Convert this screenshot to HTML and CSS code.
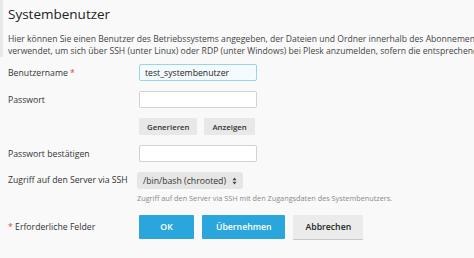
FILE: index.html
```html
<!DOCTYPE html>
<html>
<head>
    <title>Systembenutzer</title>
    <link rel="stylesheet" href="styles.css">
</head>
<body>
    <div class="header">
        <h1>Systembenutzer</h1>
        <p class="intro">Hier können Sie einen Benutzer des Betriebssystems angegeben, der Dateien und Ordner innerhalb des Abonnements verwaltet.<br>verwendet, um sich über SSH (unter Linux) oder RDP (unter Windows) bei Plesk anzumelden, sofern die entsprechenden Berechtigungen erteilt wurden.</p>
    </div>

    <form class="form">
        <div class="row">
            <label class="label">Benutzername <span class="req">*</span></label>
            <div class="field"><input class="input focused" type="text" value="test_systembenutzer"></div>
        </div>
        <div class="row">
            <label class="label">Passwort</label>
            <div class="field"><input class="input" type="password"></div>
        </div>
        <div class="row">
            <div class="label"></div>
            <div class="field">
                <button type="button" class="btn small">Generieren</button>
                <button type="button" class="btn small">Anzeigen</button>
            </div>
        </div>
        <div class="row">
            <label class="label">Passwort bestätigen</label>
            <div class="field"><input class="input" type="password"></div>
        </div>
        <div class="row row-select">
            <label class="label">Zugriff auf den Server via SSH</label>
            <div class="field">
                <div class="select">/bin/bash (chrooted)
                    <svg class="arrows" viewBox="0 0 6 10" width="5" height="8"><path d="M3 0.5L5.5 4H0.5z M3 9.5L5.5 6H0.5z" fill="#444"/></svg>
                </div>
                <div class="hint">Zugriff auf den Server via SSH mit den Zugangsdaten des Systembenutzers.</div>
            </div>
        </div>
        <div class="row row-footer">
            <div class="label"><span class="req">*</span> Erforderliche Felder</div>
            <div class="field">
                <button type="button" class="btn primary">OK</button>
                <button type="button" class="btn primary">Übernehmen</button>
                <button type="button" class="btn cancel">Abbrechen</button>
            </div>
        </div>
    </form>
</body>
</html>
```

FILE: styles.css
```css
html, body {
    margin: 0;
    padding: 0;
    background-color: #f9f9f9;
    overflow: hidden;
}
body {
    font-family: 'Open Sans', 'Noto Sans', sans-serif;
    color: #333;
    width: 900px;
}
.header {
    border-left: 3px solid #e8e8e8;
    padding: 5px 0 0 5px;
}
h1 {
    font-size: 13.5px;
    font-weight: 400;
    color: #222;
    margin: 0 0 10px 0;
    line-height: 18px;
}
.intro {
    font-size: 8.6px;
    line-height: 12px;
    color: #444;
    margin: 0;
    white-space: nowrap;
}
.form {
    padding: 7px 0 0 8px;
}
.row {
    display: flex;
    align-items: center;
    min-height: 17px;
    margin-bottom: 10px;
}
.label {
    width: 131px;
    font-size: 8.7px;
    color: #333;
    flex-shrink: 0;
}
.req {
    color: #e0433d;
}
.field {
    display: flex;
    align-items: center;
    gap: 7px;
}
.input {
    width: 118px;
    height: 17px;
    box-sizing: border-box;
    border: 1px solid #d2d2d2;
    border-radius: 2px;
    background: #fff;
    font-family: inherit;
    font-size: 8.7px;
    padding: 0 5px;
    color: #222;
}
.input.focused {
    border-color: #9cd2ea;
    background: #f4fbfe;
}
.btn {
    font-family: inherit;
    border: none;
    border-radius: 1px;
    cursor: pointer;
}
.btn.small {
    height: 17px;
    padding: 0 8px;
    background: #e8e8e8;
    font-size: 7.8px;
    color: #333;
    font-weight: 600;
}
.row-select {
    align-items: flex-start;
    margin-bottom: 12px;
}
.row-select .field {
    flex-direction: column;
    align-items: flex-start;
    gap: 4px;
}
.row-select .label {
    padding-top: 2px;
}
.select {
    display: flex;
    align-items: center;
    gap: 6px;
    height: 17px;
    margin-left: -2px;
    padding: 0 6px;
    background: #e6e6e6;
    border-radius: 3px;
    font-size: 8.7px;
    color: #333;
}
.hint {
    font-size: 7.3px;
    color: #8a8a8a;
    margin-left: -2px;
}
.row-footer .field {
    gap: 8px;
}
.btn.primary {
    height: 24px;
    background: #2aa6dc;
    color: #fff;
    font-weight: 600;
    font-size: 8.7px;
    padding: 0 14px;
}
.btn.primary:first-child {
    width: 55px;
}
.btn.cancel {
    height: 24px;
    background: #ebebeb;
    color: #222;
    font-weight: 600;
    font-size: 8.7px;
    padding: 0 12px;
    box-shadow: 0 1px 0 #c8c8c8;
}
```
